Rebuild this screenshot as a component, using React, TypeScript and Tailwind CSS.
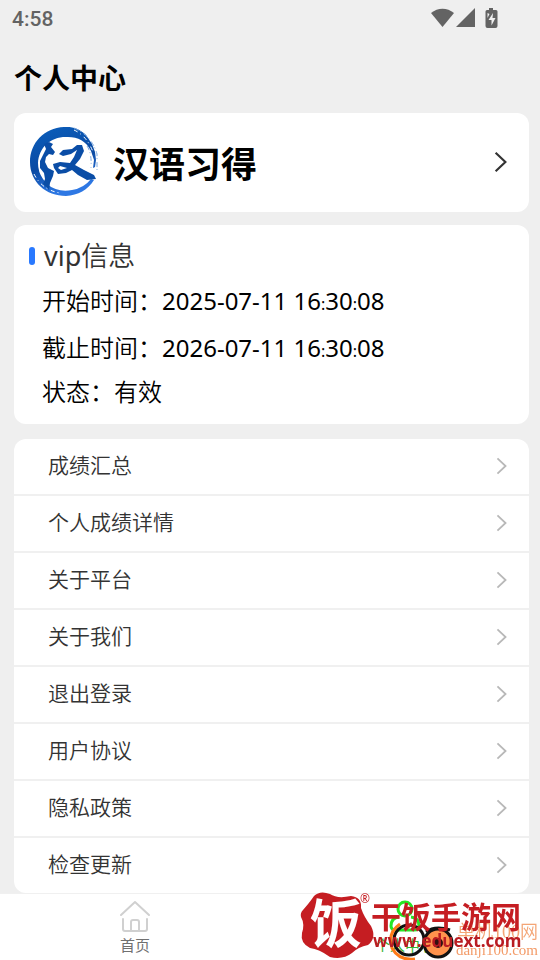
import React from "react";

const records = ["成绩汇总", "个人成绩详情", "关于平台", "关于我们", "退出登录", "用户协议", "隐私政策", "检查更新"];

function Chevron({ className }: { className: string }) {
  return (
    <svg viewBox="0 0 12 20" className={className} fill="none" stroke="currentColor" aria-hidden="true">
      <path d="M1.5 1.5 10.5 10 1.5 18.5" />
    </svg>
  );
}

function StatusBar() {
  return (
    <div className="flex h-9 items-center justify-between pt-[2px] pr-10 pl-3 text-[#636363]">
      <span className="font-[Roboto] text-[21px] leading-8 font-medium">4:58</span>
      <svg width="70" height="22" viewBox="0 0 70 22" fill="currentColor" aria-hidden="true">
        <path d="M1 5C8-.8 17-.8 24 5L12.500 19Z" />
        <path d="M45 0V19H26Z" />
        <path fillRule="evenodd" d="M59 0h4v2h3q1.500 0 1.500 1.500V18q0 2-2 2h-8q-2 0-2-2V3.500Q55.500 2 57 2h2ZM57.500 5v5l2-4Zm5.500 0-4.500 7h3v5.500l4-7.500h-3Z" />
      </svg>
    </div>
  );
}

function Logo() {
  return (
    <svg viewBox="0 0 70 70" className="size-[70px] shrink-0" role="img" aria-label="汉语习得">
      <defs>
        <linearGradient id="ink" x1="0" y1="0" x2="0.300" y2="1">
          <stop offset="0" stopColor="#0b5fbc" />
          <stop offset="0.600" stopColor="#0a4aa3" />
          <stop offset="1" stopColor="#2e78e4" />
        </linearGradient>
      </defs>
      <path fill="url(#ink)" fillRule="evenodd" d="M35 0C44-1 52 3 57 8L63 17 66 25 67 33 66 40 64 41 65 33 62 24C57 14 49 10 39 10C22 9 10 20 9 36Q9 45 14 52L18 57C25 63 34 65 43 63Q55 61 62 52L65 53C59 63 49 68 37 69C17 69 1 55 1 35C1 16 15 1 35 0Z" />
      <path fill="#0a4da6" d="M15 17 20 15 24 17 22 20 26 25 24 28 20 27 17 30 16 35 19 41 25 44 24 49 21 56 20 63 14 57 16 52 15 46 11 41 11 34 15 26 17 22Z" />
      <path fill="#0a4da6" fillRule="evenodd" d="M30 27 34 23 43 22 48 18 53 18 55 24 51 32 46 38 55 43 65 48 67 52 58 53 49 48 43 43 37 46 29 47 25 41 24 37 31 35 41 36 45 30 48 23 42 27 34 29ZM31 39 29 41 32 43 38 41Z" />
      <path fill="none" stroke="#fff" strokeWidth="1" strokeDasharray="4 3 1 4" d="M45 3Q58 9 64 25M5 47Q13 63 31 66" />
      <path fill="none" stroke="#7ba8e0" strokeWidth="1" strokeDasharray="5 2 1 3" d="M45 1Q63 9 68 27L68 43M58 19Q63 26 62 41" />
    </svg>
  );
}

function Profile() {
  return (
    <button type="button" className="flex h-[99px] items-center rounded-xl bg-white pr-[22px] pb-[2px] pl-[15px] text-left">
      <Logo />
      <span className="ml-[14px] flex-1 pt-[6px] text-[36px] leading-10 font-bold">汉语习得</span>
      <Chevron className="h-[22px] w-[13px] stroke-2 text-[#333]" />
    </button>
  );
}

function DateTime({ date, time }: { date: string; time: string }) {
  const [hours, minutes, seconds] = time.split(":");
  return (
    <dd className="font-normal">
      {date} {hours}
      <span className="text-base leading-6">:</span>
      {minutes}
      <span className="text-base leading-6">:</span>
      {seconds}
    </dd>
  );
}

function VipInfo() {
  return (
    <section className="mt-[13px] rounded-xl bg-white px-[15px] pt-[10px] pb-3">
      <h2 className="flex items-center text-[27px] leading-[42px] font-[350] text-[#333]">
        <span className="mr-[9px] h-[18px] w-[6px] rounded-full bg-[#2979ff]" />
        <span className="font-normal">vip</span>信息
      </h2>
      <dl className="pl-[13px] text-2xl font-[350]">
        <div className="flex h-[48px] items-center"><dt>开始时间：</dt><DateTime date="2025-07-11" time="16:30:08" /></div>
        <div className="flex h-[46px] items-center"><dt>截止时间：</dt><DateTime date="2026-07-11" time="16:30:08" /></div>
        <div className="flex h-[41px] items-center"><dt>状态：</dt><dd>有效</dd></div>
      </dl>
    </section>
  );
}

function Menu() {
  return (
    <ul className="mt-[15px] overflow-hidden rounded-xl bg-white">
      {records.map((label) => (
        <li key={label} className="border-b-2 border-[#f0f0f0] last:border-b-0">
          <button type="button" className="flex h-[55px] w-full items-center justify-between pr-[22px] pb-[2px] pl-[34px] text-[21px] font-[350] text-[#333]">
            {label}
            <Chevron className="h-[18px] w-[11px] stroke-2 text-[#b8b8b8]" />
          </button>
        </li>
      ))}
    </ul>
  );
}

function Watermark() {
  return (
    <div className="pointer-events-none absolute -top-1 right-0 h-[72px] w-[245px]">
      <svg viewBox="0 0 245 72" className="absolute inset-0" aria-hidden="true">
        <path fill="#c51d22" d="M8 20Q15 12 19 6Q25 0 35 4Q42 9 56 6Q67 7 66 18Q69 27 76 36Q82 48 73 55Q63 57 57 63Q48 70 35 67Q24 59 15 58Q5 53 7 43Q10 34 6 27Q5 23 8 20Z" />
        <g fill="none" stroke="#111" strokeWidth="3">
          <circle cx="114" cy="50" r="15" />
          <path stroke="#ff7b17" d="M105 34Q92 43 97 58Q104 71 120 69" />
          <circle cx="143" cy="53" r="14" fill="#ff934d" />
          <path d="M131 42Q140 35 155 40" />
        </g>
        <circle cx="143" cy="53" r="5" fill="#311" />
      </svg>
      <span className="absolute top-1 left-[15px] text-[52px] leading-[58px] font-bold text-white">饭</span>
      <span className="absolute top-[3px] left-[65px] text-xs leading-3 text-[#c51d22]">®</span>
      <span className="absolute top-[28px] right-[2px] font-['Liberation_Serif','Noto_Sans_CJK_SC',serif] text-[18px] leading-7 font-[350] whitespace-nowrap text-[#f4a575]">单机100网</span>
      <span className="absolute top-[48px] right-[2px] font-['Liberation_Serif',serif] text-[15px] leading-6 text-[#f39b68]">danji100.com</span>
      <span className="absolute top-[9px] left-[76px] text-[30px] leading-9 font-bold whitespace-nowrap text-[#c51d22]">干饭手游网</span>
      <span className="absolute top-[39px] left-[78px] font-['Open_Sans',sans-serif] text-[17px] leading-6 font-bold text-[#b91c22]">www.eduext.com</span>
    </div>
  );
}

function TabBar() {
  return (
    <nav className="sticky bottom-0 flex h-[67px] border-t border-[#f0f0f0] bg-white text-[15px] leading-5">
      <button type="button" className="flex flex-1 flex-col items-center pt-[5px] text-[#707070]">
        <svg width="32" height="36" viewBox="0 0 32 36" fill="none" stroke="#d0d0d0" strokeWidth="2" strokeLinecap="round" strokeLinejoin="round" aria-hidden="true">
          <path d="M2 16 16 3 30 16M4 20V30Q4 32 6 32H26Q28 32 28 30V20M12 32V23Q12 21 14 21H18Q20 21 20 23V32" />
        </svg>
        首页
      </button>
      <button type="button" className="flex flex-1 flex-col items-center pt-[5px] text-[#35b535]">
        <svg width="32" height="36" viewBox="0 0 32 36" fill="none" stroke="#25e525" strokeWidth="3" aria-hidden="true">
          <circle cx="16" cy="10" r="7" />
          <path d="M10 18Q2 19 2 27Q2 31 7 31H25Q30 31 30 27Q30 19 22 18" />
        </svg>
        个人中心
      </button>
      <Watermark />
    </nav>
  );
}

export default function App() {
  return (
    <div className="flex min-h-screen flex-col bg-[#efefef] font-['Noto_Sans','Noto_Sans_CJK_SC',sans-serif] text-black">
      <StatusBar />
      <main className="flex flex-1 flex-col pr-[11px] pl-[14px]">
        <h1 className="flex h-[77px] items-center pt-[6px] text-[28px] font-bold">个人中心</h1>
        <Profile />
        <VipInfo />
        <Menu />
      </main>
      <TabBar />
    </div>
  );
}
